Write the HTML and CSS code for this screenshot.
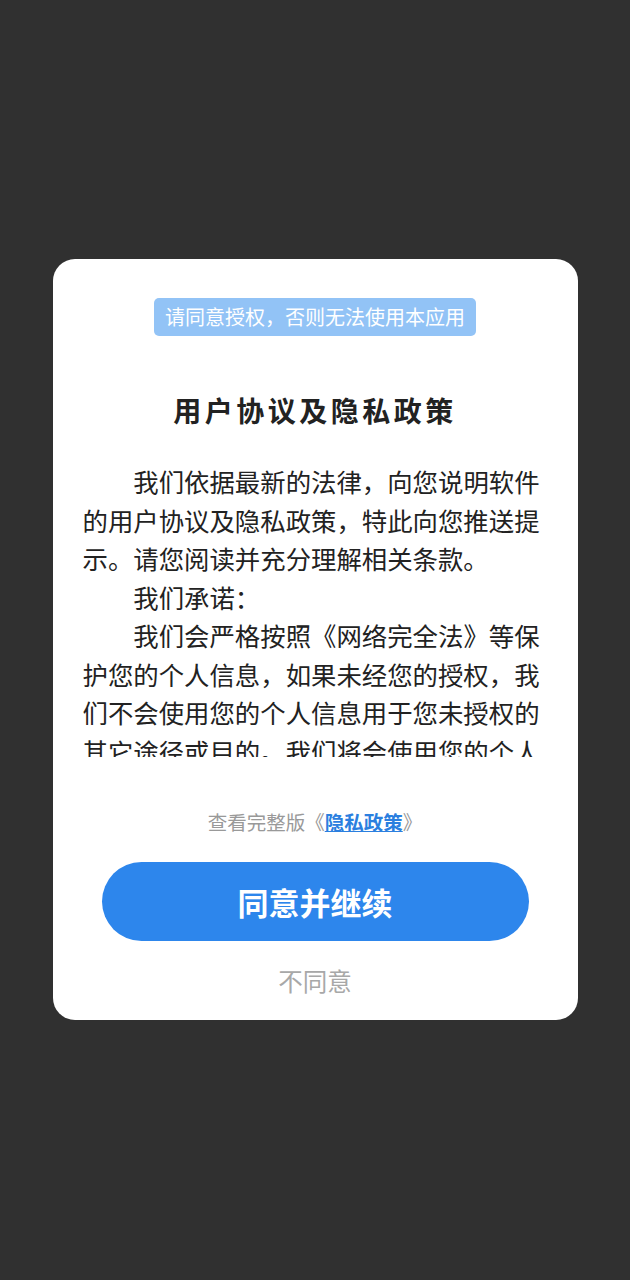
FILE: index.html
```html
<!DOCTYPE html>
<html lang="zh-CN">
<head>
    <meta charset="UTF-8">
    <meta name="viewport" content="width=device-width, initial-scale=1.0">
    <title>用户协议及隐私政策</title>
    <link rel="stylesheet" href="styles.css">
</head>
<body>
    <div class="dialog">
        <div class="tip-wrap">
            <span class="tip">请同意授权，否则无法使用本应用</span>
        </div>
        <h1 class="title">用户协议及隐私政策</h1>
        <div class="content">
            <p>我们依据最新的法律，向您说明软件的用户协议及隐私政策，特此向您推送提示。请您阅读并充分理解相关条款。</p>
            <p>我们承诺：</p>
            <p>我们会严格按照《网络完全法》等保护您的个人信息，如果未经您的授权，我们不会使用您的个人信息用于您未授权的其它途径或目的。我们将会使用您的个人信息为您提供更好的服务。</p>
        </div>
        <div class="policy">查看完整版《<a href="#">隐私政策</a>》</div>
        <button class="agree">同意并继续</button>
        <div class="disagree">不同意</div>
    </div>
</body>
</html>
```
FILE: styles.css
```css
body {
    margin: 0;
    height: 1280px;
    background-color: #303030;
    font-family: "Noto Sans CJK SC", "Noto Sans", sans-serif;
    display: flex;
    justify-content: center;
    align-items: flex-start;
}
.dialog {
    margin-top: 259px;
    width: 525px;
    height: 761px;
    background-color: #fff;
    border-radius: 22px;
    box-sizing: border-box;
    padding: 39px 0 0;
    display: flex;
    flex-direction: column;
    align-items: center;
}
.tip-wrap {
    height: 38px;
}
.tip {
    display: inline-block;
    background-color: #92c3f6;
    color: #fff;
    font-size: 20px;
    line-height: 38px;
    padding: 0 11px;
    border-radius: 5px;
}
.title {
    margin: 52px 0 0;
    font-size: 28px;
    letter-spacing: 3.5px;
    line-height: 44px;
    color: #222;
    font-weight: bold;
}
.content {
    align-self: flex-start;
    margin: 30px 0 0 30px;
    width: 460px;
    height: 295px;
    overflow: hidden;
    color: #222;
    font-size: 25.4px;
    line-height: 38.5px;
}
.content p {
    margin: 0;
    text-indent: 2em;
}
.policy {
    margin-top: 50px;
    font-size: 19.5px;
    line-height: 30px;
    color: #999;
}
.policy a {
    color: #2b7fdf;
    font-weight: bold;
    text-decoration: underline;
}
.agree {
    margin-top: 25px;
    width: 427px;
    height: 79px;
    border: none;
    border-radius: 40px;
    background-color: #2d86ec;
    color: #fff;
    font-family: inherit;
    font-size: 31px;
    font-weight: bold;
    cursor: pointer;
}
.disagree {
    margin-top: 20px;
    font-size: 24.5px;
    line-height: 40px;
    color: #a8a8a8;
}
```
